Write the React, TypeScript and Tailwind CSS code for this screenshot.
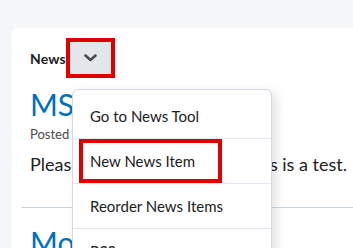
const menuItems = ["Go to News Tool", "New News Item", "Reorder News Items", "RSS"];

export default function App() {
  return (
    <div className="h-[248px] w-[353px] overflow-hidden bg-[#f5f6f8] pt-[28px] pl-[12px] font-['Lato','Noto_Sans',sans-serif] text-[#202122]">
      <div className="relative w-[400px] h-[260px] rounded-l-md bg-white pl-[18px] pt-[10px]">
        <div className="flex items-center">
          <span className="text-[14px] font-bold tracking-[0.1px]">News</span>
          <div className="flex h-[40px] w-[49px] items-center justify-center border-[4px] border-[#e00000] bg-[#e3e6eb]">
            <svg width="13" height="8" viewBox="0 0 13 8" fill="none" className="mt-[-1px]">
              <path d="M1.5 1.5 L6.5 6 L11.5 1.5" stroke="#494c4e" strokeWidth="2.6" strokeLinecap="round" strokeLinejoin="round" />
            </svg>
          </div>
        </div>

        <h2 className="mt-[8px] text-[30px] leading-[36px] text-[#006fbf]">MS Teams Update</h2>
        <p className="mt-[2px] text-[13px] leading-[20px] text-[#494c4e]">Posted Oct 4, 2023 9:15 AM</p>
        <p className="mt-[7px] whitespace-nowrap text-[18px] leading-[26px]">Please ignore this message, this is a test.</p>

        <div className="mt-[30px] ml-[-9px] h-px w-[380px] bg-[#cdd5dc]" />
        <h2 className="mt-[16px] text-[30px] leading-[36px] text-[#006fbf]">More News</h2>

        <div className="absolute left-[60px] top-[61px] w-[200px] rounded-md border border-[#d3d9e3] bg-white pt-[4px] shadow-[4px_4px_12px_rgba(0,0,0,0.12)]">
          {menuItems.map((item, i) => (
            <div
              key={item}
              className={`relative flex h-[45px] items-center pl-[17px] text-[15px] ${i < menuItems.length - 1 ? "border-b border-[#e3e9f1]" : ""}`}
            >
              {item}
              {i === 1 && (
                <div className="absolute left-[6px] top-[0px] h-[44px] w-[143px] border-[4px] border-[#e00000]" />
              )}
            </div>
          ))}
        </div>
      </div>
    </div>
  );
}
